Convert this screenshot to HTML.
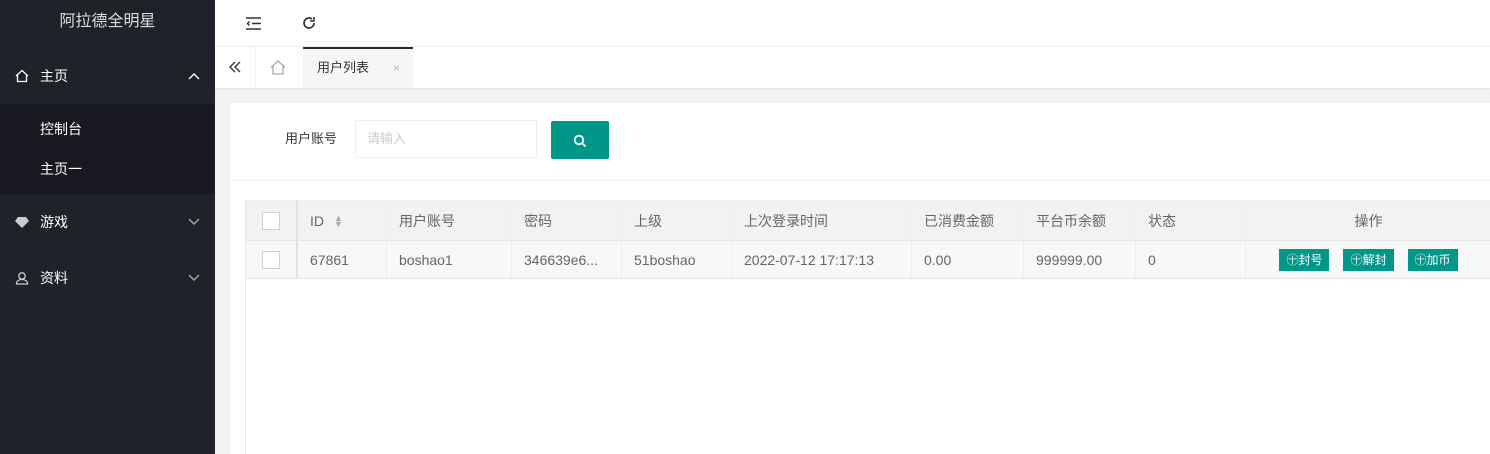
<!DOCTYPE html>
<html><head><meta charset="utf-8"><style>
*{margin:0;padding:0;box-sizing:border-box}
body{width:1490px;height:454px;overflow:hidden;font-family:"Liberation Sans","Noto Sans CJK SC",sans-serif;font-size:14px;color:#333;background:#f2f2f2;position:relative}
.side{position:absolute;left:0;top:0;width:215px;height:454px;background:#20222a;color:#fff}
.logo{height:47px;line-height:44px;text-align:center;font-size:16px;color:#ddd}
.mi{position:absolute;left:0;width:215px;height:56px;line-height:56px;padding-left:40px;font-size:14px;color:#fff}
.mi svg.ic{position:absolute;left:15px;top:21px}
.mi svg.ar{position:absolute;left:188px;top:24px}
.sub{position:absolute;left:0;top:104px;width:215px;height:90px;background:#181920}
.sub div{height:40px;line-height:40px;padding-left:40px;color:#fff;margin-top:5px}
.head{position:absolute;left:215px;top:0;width:1275px;height:47px;background:#fff;border-bottom:1px solid #eee}
.tabs{position:absolute;left:215px;top:47px;width:1275px;height:41px;background:#fff;box-shadow:0 1px 2px rgba(0,0,0,.08)}
.card{position:absolute;left:230px;top:103px;width:1260px;height:351px;background:#fff}
.t{position:absolute;left:245px;top:200px;width:1245px;height:254px;border-left:1px solid #e6e6e6}
.row{position:absolute;left:0;width:1245px;border-bottom:1px solid #e6e6e6}
.c{position:absolute;top:0;height:100%;border-left:1px solid #eee;padding-left:12px;display:flex;align-items:center;color:#666}
.cb{width:18px;height:18px;border:1px solid #d2d2d2;background:#fff;margin-left:4px}
.btn{display:inline-block;height:22px;line-height:22px;padding:0 7px;background:#009688;color:#fff;font-size:12px;margin:0 7px}
</style></head><body>
<div class="side">
<div class="logo">阿拉德全明星</div>
<div class="mi" style="top:48px"><svg class="ic" width="14" height="14" viewBox="0 0 14 14" fill="none" stroke="#fff" stroke-width="1.3"><path d="M1 7L7 1.5 13 7M2.5 6v6.5h9V6"/></svg>主页<svg class="ar" width="12" height="8" viewBox="0 0 12 8" fill="none" stroke="#fff" stroke-width="1.4"><path d="M1 7L6 2l5 5"/></svg></div>
<div class="sub"><div>控制台</div><div style="margin-top:0">主页一</div></div>
<div class="mi" style="top:194px"><svg class="ic" width="14" height="14" viewBox="0 0 14 14" fill="#ccc"><path d="M3 2h8l3 4-7 7-7-7z"/></svg>游戏<svg class="ar" width="12" height="8" viewBox="0 0 12 8" fill="none" stroke="#aaa" stroke-width="1.4"><path d="M1 1l5 5 5-5"/></svg></div>
<div class="mi" style="top:250px"><svg class="ic" width="14" height="14" viewBox="0 0 14 14" fill="none" stroke="#ccc" stroke-width="1.3"><circle cx="7" cy="5" r="3.2"/><path d="M1.5 13c0-3 2.5-4.5 5.5-4.5s5.5 1.5 5.5 4.5z"/></svg>资料<svg class="ar" width="12" height="8" viewBox="0 0 12 8" fill="none" stroke="#aaa" stroke-width="1.4"><path d="M1 1l5 5 5-5"/></svg></div>
</div>
<div class="head">
<svg style="position:absolute;left:31px;top:17px" width="15" height="13" viewBox="0 0 15 13" fill="none" stroke="#333" stroke-width="1.5"><path d="M0 1h15M6 6.5h9M0 12h15M3.5 4.5L1.5 6.5l2 2"/></svg>
<svg style="position:absolute;left:87px;top:16px" width="14" height="14" viewBox="0 0 14 14" fill="none" stroke="#333" stroke-width="1.7"><path d="M12 7A5 5 0 1 1 10 3"/><path d="M12 1v4H8" stroke-width="1.5"/></svg>
</div>
<div class="tabs">
<svg style="position:absolute;left:13px;top:14px" width="14" height="12" viewBox="0 0 14 12" fill="none" stroke="#333" stroke-width="1.4"><path d="M7 1L2 6l5 5M12 1L7 6l5 5"/></svg>
<div style="position:absolute;left:40px;top:0;width:1px;height:41px;background:#f2f2f2"></div>
<svg style="position:absolute;left:55px;top:13px" width="16" height="15" viewBox="0 0 16 15" fill="none" stroke="#999" stroke-width="1.1"><path d="M1 7.5L8 1l7 6.5M3 6v8h10V6"/></svg>
<div style="position:absolute;left:88px;top:0;width:110px;height:41px;background:#f6f6f6;border-top:2px solid #2b2b2b;line-height:38px;padding-left:14px;font-size:13px;color:#333">用户列表<span style="position:absolute;left:90px;color:#bbb;font-size:12px">×</span></div>
</div>
<div class="card">
<div style="position:absolute;left:55px;top:27px;line-height:18px;font-size:13px">用户账号</div>
<div style="position:absolute;left:125px;top:17px;width:182px;height:38px;border:1px solid #eee;line-height:36px;padding-left:11px;color:#ccc;font-size:13px">请输入</div>
<div style="position:absolute;left:321px;top:18px;width:58px;height:38px;background:#009688;border-radius:2px"><svg style="position:absolute;left:22px;top:13px" width="14" height="14" viewBox="0 0 14 14" fill="none" stroke="#fff" stroke-width="1.8"><circle cx="6" cy="6" r="4.3"/><path d="M9 9l3.5 3.5"/></svg></div>
<div style="position:absolute;left:0;top:77px;width:1260px;height:1px;background:#f3f3f3"></div>
</div>
<div class="t">
<div class="row" style="top:0;height:41px;background:#f2f2f2;border-top:1px solid #eee">
<div class="c" style="left:0;border:none"><div class="cb"></div></div>
<div class="c" style="left:50px;border-left:2px solid #e2e2e2">ID<span style="margin-left:10px;font-size:9px;color:#aaa;line-height:6px">▲<br>▼</span></div>
<div class="c" style="left:140px">用户账号</div><div class="c" style="left:265px">密码</div><div class="c" style="left:375px">上级</div><div class="c" style="left:485px">上次登录时间</div><div class="c" style="left:665px">已消费金额</div><div class="c" style="left:777px">平台币余额</div><div class="c" style="left:889px">状态</div><div class="c" style="left:999px;width:246px;justify-content:center;padding:0">操作</div>
</div>
<div class="row" style="top:41px;height:38px;background:#f8f8f8">
<div class="c" style="left:0;border:none"><div class="cb"></div></div>
<div class="c" style="left:50px;border-left:2px solid #e2e2e2">67861</div>
<div class="c" style="left:140px">boshao1</div><div class="c" style="left:265px">346639e6...</div><div class="c" style="left:375px">51boshao</div><div class="c" style="left:485px">2022-07-12 17:17:13</div><div class="c" style="left:665px">0.00</div><div class="c" style="left:777px">999999.00</div><div class="c" style="left:889px">0</div><div class="c" style="left:999px;width:246px;justify-content:center;padding:0"><span class="btn">㊉封号</span><span class="btn">㊉解封</span><span class="btn">㊉加币</span></div>
</div>
</div>
</body></html>
